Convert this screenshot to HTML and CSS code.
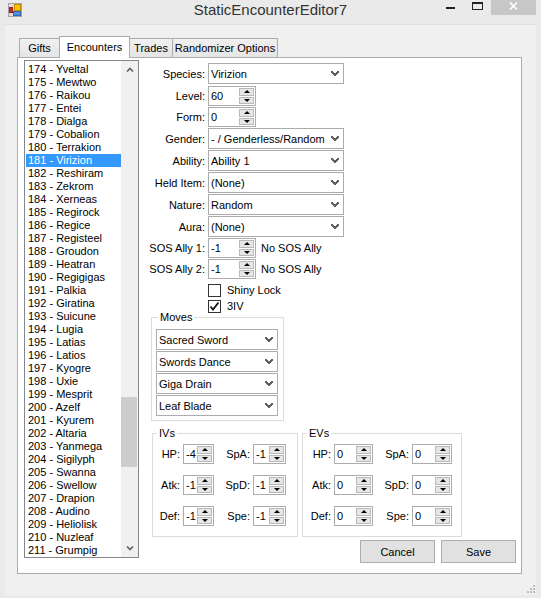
FILE: index.html
```html
<!DOCTYPE html>
<html lang="en">
<head>
  <meta charset="UTF-8" />
  <title>StaticEncounterEditor7</title>
  <link rel="stylesheet" href="styles.css">
</head>
<body>
  <div class="window">
    <div class="titlebar">
      <svg class="app-icon" width="14" height="14" viewBox="0 0 14 14">
        <rect x="0.5" y="0.5" width="13" height="13" fill="#dedede" stroke="#a4a4a4"/>
        <rect x="6.5" y="1.5" width="6" height="6" fill="#f7c600" stroke="#c48a00"/>
        <rect x="1.5" y="4.5" width="3" height="5" fill="#d42a1e" stroke="#9a1a12"/>
        <rect x="5.5" y="8.5" width="7" height="4" fill="#4d8ee6" stroke="#2f62b0"/>
      </svg>
      <div class="title">StaticEncounterEditor7</div>
      <div class="caption">
        <div class="cap-btn">
          <svg width="9" height="2"><rect width="9" height="2" fill="#222"/></svg>
        </div>
        <div class="cap-btn">
          <svg width="11" height="8"><rect x="0.5" y="1" width="10" height="6.5" fill="none" stroke="#222"/><rect width="11" height="2" fill="#222"/></svg>
        </div>
        <div class="cap-btn close">
          <svg width="9" height="8"><path d="M1 0.5 L8 7.5 M8 0.5 L1 7.5" stroke="#fff" stroke-width="1.6"/></svg>
        </div>
      </div>
    </div>

    <div class="client">
      <div class="tabs">
        <div class="tab tab-gifts">Gifts</div>
        <div class="tab tab-enc active">Encounters</div>
        <div class="tab tab-trades">Trades</div>
        <div class="tab tab-rand">Randomizer Options</div>
      </div>

      <div class="tabpage">
        <div class="listbox">
          <div class="items">
            <div class="item">174 - Yveltal</div>
            <div class="item">175 - Mewtwo</div>
            <div class="item">176 - Raikou</div>
            <div class="item">177 - Entei</div>
            <div class="item">178 - Dialga</div>
            <div class="item">179 - Cobalion</div>
            <div class="item">180 - Terrakion</div>
            <div class="item selected">181 - Virizion</div>
            <div class="item">182 - Reshiram</div>
            <div class="item">183 - Zekrom</div>
            <div class="item">184 - Xerneas</div>
            <div class="item">185 - Regirock</div>
            <div class="item">186 - Regice</div>
            <div class="item">187 - Registeel</div>
            <div class="item">188 - Groudon</div>
            <div class="item">189 - Heatran</div>
            <div class="item">190 - Regigigas</div>
            <div class="item">191 - Palkia</div>
            <div class="item">192 - Giratina</div>
            <div class="item">193 - Suicune</div>
            <div class="item">194 - Lugia</div>
            <div class="item">195 - Latias</div>
            <div class="item">196 - Latios</div>
            <div class="item">197 - Kyogre</div>
            <div class="item">198 - Uxie</div>
            <div class="item">199 - Mesprit</div>
            <div class="item">200 - Azelf</div>
            <div class="item">201 - Kyurem</div>
            <div class="item">202 - Altaria</div>
            <div class="item">203 - Yanmega</div>
            <div class="item">204 - Sigilyph</div>
            <div class="item">205 - Swanna</div>
            <div class="item">206 - Swellow</div>
            <div class="item">207 - Drapion</div>
            <div class="item">208 - Audino</div>
            <div class="item">209 - Heliolisk</div>
            <div class="item">210 - Nuzleaf</div>
            <div class="item">211 - Grumpig</div>
          </div>
          <div class="scrollbar">
            <div class="sb-btn">
              <svg width="8" height="5"><path d="M1 4.5 L4 1.5 L7 4.5" fill="none" stroke="#606060" stroke-width="1.6"/></svg>
            </div>
            <div class="sb-track"><div class="sb-thumb"></div></div>
            <div class="sb-btn">
              <svg width="8" height="5"><path d="M1 0.5 L4 3.5 L7 0.5" fill="none" stroke="#606060" stroke-width="1.6"/></svg>
            </div>
          </div>
        </div>

        <div class="editor">
          <div class="fields">
            <label>Species:</label>
            <div class="combo wide"><span>Virizion</span><i class="chev"></i></div>
            <label>Level:</label>
            <div class="num lvl"><span class="val">60</span><span class="spin"><i class="up"></i><i class="down"></i></span></div>
            <label>Form:</label>
            <div class="num lvl"><span class="val">0</span><span class="spin"><i class="up"></i><i class="down"></i></span></div>
            <label>Gender:</label>
            <div class="combo wide"><span>- / Genderless/Random</span><i class="chev"></i></div>
            <label>Ability:</label>
            <div class="combo wide"><span>Ability 1</span><i class="chev"></i></div>
            <label>Held Item:</label>
            <div class="combo wide"><span>(None)</span><i class="chev"></i></div>
            <label>Nature:</label>
            <div class="combo wide"><span>Random</span><i class="chev"></i></div>
            <label>Aura:</label>
            <div class="combo wide"><span>(None)</span><i class="chev"></i></div>
            <label>SOS Ally 1:</label>
            <div class="sos">
              <div class="num lvl"><span class="val">-1</span><span class="spin"><i class="up"></i><i class="down"></i></span></div>
              <span>No SOS Ally</span>
            </div>
            <label>SOS Ally 2:</label>
            <div class="sos">
              <div class="num lvl"><span class="val">-1</span><span class="spin"><i class="up"></i><i class="down"></i></span></div>
              <span>No SOS Ally</span>
            </div>
          </div>

          <div class="checks">
            <div class="check"><span class="box"></span>Shiny Lock</div>
            <div class="check"><span class="box">
              <svg width="11" height="11" viewBox="0 0 11 11"><path d="M1.5 5.5 L4 8.5 L9.5 1.5" fill="none" stroke="#111" stroke-width="1.8"/></svg>
            </span>3IV</div>
          </div>

          <fieldset class="group moves">
            <legend>Moves</legend>
            <div class="combo"><span>Sacred Sword</span><i class="chev"></i></div>
            <div class="combo"><span>Swords Dance</span><i class="chev"></i></div>
            <div class="combo"><span>Giga Drain</span><i class="chev"></i></div>
            <div class="combo"><span>Leaf Blade</span><i class="chev"></i></div>
          </fieldset>

          <div class="stats">
            <fieldset class="group ivs">
              <legend>IVs</legend>
              <label>HP:</label>
              <div class="num"><span class="val">-4</span><span class="spin"><i class="up"></i><i class="down"></i></span></div>
              <label>SpA:</label>
              <div class="num"><span class="val">-1</span><span class="spin"><i class="up"></i><i class="down"></i></span></div>
              <label>Atk:</label>
              <div class="num"><span class="val">-1</span><span class="spin"><i class="up"></i><i class="down"></i></span></div>
              <label>SpD:</label>
              <div class="num"><span class="val">-1</span><span class="spin"><i class="up"></i><i class="down"></i></span></div>
              <label>Def:</label>
              <div class="num"><span class="val">-1</span><span class="spin"><i class="up"></i><i class="down"></i></span></div>
              <label>Spe:</label>
              <div class="num"><span class="val">-1</span><span class="spin"><i class="up"></i><i class="down"></i></span></div>
            </fieldset>
            <fieldset class="group evs">
              <legend>EVs</legend>
              <label>HP:</label>
              <div class="num"><span class="val">0</span><span class="spin"><i class="up"></i><i class="down"></i></span></div>
              <label>SpA:</label>
              <div class="num"><span class="val">0</span><span class="spin"><i class="up"></i><i class="down"></i></span></div>
              <label>Atk:</label>
              <div class="num"><span class="val">0</span><span class="spin"><i class="up"></i><i class="down"></i></span></div>
              <label>SpD:</label>
              <div class="num"><span class="val">0</span><span class="spin"><i class="up"></i><i class="down"></i></span></div>
              <label>Def:</label>
              <div class="num"><span class="val">0</span><span class="spin"><i class="up"></i><i class="down"></i></span></div>
              <label>Spe:</label>
              <div class="num"><span class="val">0</span><span class="spin"><i class="up"></i><i class="down"></i></span></div>
            </fieldset>
          </div>

          <div class="actions">
            <button class="btn">Cancel</button>
            <button class="btn">Save</button>
          </div>
        </div>
      </div>

      <svg class="grip" width="8" height="8" viewBox="0 0 8 8">
        <rect x="6" y="0" width="2" height="2" fill="#bdbdbd"/>
        <rect x="3" y="3" width="2" height="2" fill="#bdbdbd"/>
        <rect x="6" y="3" width="2" height="2" fill="#bdbdbd"/>
        <rect x="0" y="6" width="2" height="2" fill="#bdbdbd"/>
        <rect x="3" y="6" width="2" height="2" fill="#bdbdbd"/>
        <rect x="6" y="6" width="2" height="2" fill="#bdbdbd"/>
      </svg>
    </div>
  </div>
</body>
</html>
```

FILE: styles.css
```css
* {
  box-sizing: border-box;
}
body {
  margin: 0;
  background: #eaeaea;
  font-family: 'Liberation Sans', Arial, sans-serif;
  font-size: 11px;
  color: #000;
}
.window {
  width: 541px;
  height: 598px;
  display: flex;
  flex-direction: column;
  background: #eaeaea;
}
.titlebar {
  height: 24px;
  flex: none;
  display: grid;
  grid-template-columns: 1fr auto 1fr;
  align-items: start;
}
.app-icon {
  margin: 3px 0 0 8px;
}
.title {
  font-size: 15px;
  line-height: 20px;
  color: #333;
}
.caption {
  justify-self: end;
  display: flex;
  margin-right: 5px;
}
.cap-btn {
  width: 27px;
  height: 15px;
  display: flex;
  align-items: center;
  justify-content: center;
}
.cap-btn:first-child svg {
  margin-top: 1px;
}
.cap-btn:nth-child(2) svg {
  margin-top: -3px;
}
.cap-btn.close {
  width: 45px;
  background: #c7c7c7;
}
.cap-btn.close svg {
  margin-top: -3px;
}

/* client area */
.client {
  flex: 1;
  margin: 0 5px 3px;
  background: #f0f0f0;
  border-top: 1px solid #e2e2e2;
  padding: 11px 0 0 12px;
  display: flex;
  flex-direction: column;
}
.tabs {
  display: flex;
  align-items: flex-end;
  padding-left: 2px;
  margin-bottom: -1px;
  position: relative;
  z-index: 1;
}
.tab {
  height: 19px;
  margin-bottom: 1px;
  margin-left: -1px;
  border: 1px solid #acacac;
  border-bottom: none;
  background: linear-gradient(#f0f0f0, #e5e5e5);
  text-align: center;
  line-height: 18px;
  white-space: nowrap;
}
.tab:first-child {
  margin-left: 0;
}
.tab.active {
  height: 22px;
  margin-bottom: 0;
  background: #fff;
  line-height: 20px;
}
.tab-gifts { width: 41px; }
.tab-enc { width: 71px; }
.tab-trades { width: 44px; }
.tab-rand { width: 106px; }

.tabpage {
  width: 505px;
  height: 517px;
  background: #fff;
  border: 1px solid #acacac;
  display: flex;
  align-items: flex-start;
}

/* list of encounters */
.listbox {
  margin: 2px 0 0 6px;
  width: 115px;
  height: 498px;
  border: 1px solid #828790;
  display: flex;
}
.items {
  flex: 1;
  padding: 2px 0 0 1px;
  overflow: hidden;
}
.item {
  height: 13px;
  line-height: 13px;
  padding-left: 2px;
  white-space: nowrap;
}
.item.selected {
  background: #3399ff;
  color: #fff;
}
.scrollbar {
  width: 17px;
  background: #f0f0f0;
  display: flex;
  flex-direction: column;
}
.sb-btn {
  height: 17px;
  display: flex;
  align-items: center;
  justify-content: center;
}
.sb-track {
  flex: 1;
}
.sb-thumb {
  margin: 319px 1px 0 0;
  height: 70px;
  background: #cdcdcd;
}

/* editor */
.editor {
  flex: 1;
  margin-left: 6px;
  padding: 5px 5px 0 0;
}
.fields {
  display: grid;
  grid-template-columns: 60px auto;
  grid-template-rows: 21px 21px 20px 21px 21px 21px 21px 21px 20px 20px;
  column-gap: 3px;
  row-gap: 1px;
  align-items: end;
  justify-items: start;
}
.fields label {
  justify-self: end;
  align-self: center;
  white-space: nowrap;
}
.combo {
  height: 21px;
  border: 1px solid #acacac;
  background: #fff;
  display: flex;
  align-items: center;
  justify-content: space-between;
  padding: 0 4px 0 2px;
  white-space: nowrap;
}
.combo.wide {
  width: 136px;
}
.chev {
  width: 8px;
  height: 5px;
  background: linear-gradient(45deg, transparent 2.6px, #606060 2.6px, #606060 4.3px, transparent 4.3px) left / 4px 5px no-repeat,
              linear-gradient(-45deg, transparent 2.6px, #606060 2.6px, #606060 4.3px, transparent 4.3px) right / 4px 5px no-repeat;
}
.num {
  height: 20px;
  border: 1px solid #acacac;
  background: #fff;
  display: flex;
  width: 100%;
}
.num.lvl {
  width: 48px;
}
.val {
  flex: 1;
  padding-left: 2px;
  line-height: 18px;
}
.spin {
  width: 16px;
  display: flex;
  flex-direction: column;
  padding: 1px 1px 1px 0;
  gap: 1px;
}
.spin i {
  flex: 1;
  background: #e6e6e6;
  border: 1px solid #b9b9b9;
  display: flex;
  align-items: center;
  justify-content: center;
}
.spin i::before {
  content: "";
  border-left: 3px solid transparent;
  border-right: 3px solid transparent;
}
.spin .up::before {
  border-bottom: 3px solid #000;
}
.spin .down::before {
  border-top: 3px solid #000;
}
.sos {
  display: flex;
  align-items: center;
  gap: 5px;
  white-space: nowrap;
}

.checks {
  margin: 3px 0 0 63px;
}
.check {
  height: 16px;
  display: flex;
  align-items: center;
  gap: 6px;
}
.box {
  width: 13px;
  height: 13px;
  border: 1px solid #333;
  background: #fff;
  display: flex;
  align-items: center;
  justify-content: center;
}

/* group boxes */
.group {
  margin: 0;
  border: 1px solid #dcdcdc;
  min-width: 0;
}
.group legend {
  padding: 0 2px;
  line-height: 11px;
}
.moves {
  margin: -2px 0 0 6px;
  width: 133px;
  padding: 6px 5px 4px 4px;
  display: flex;
  flex-direction: column;
  gap: 1px;
}
.moves legend {
  margin-left: 2px;
}
.stats {
  display: flex;
  gap: 4px;
  margin: 7px 0 0 7px;
}
.ivs, .evs {
  padding: 5px 0 10px 4px;
  display: grid;
  grid-auto-rows: 20px;
  row-gap: 11px;
  column-gap: 3px;
  align-items: center;
}
.ivs {
  width: 146px;
  grid-template-columns: 23px 31px 33px 33px;
}
.evs {
  width: 160px;
  grid-template-columns: 24px 39px 33px 40px;
}
.ivs label, .evs label {
  justify-self: end;
  white-space: nowrap;
}

.actions {
  display: flex;
  justify-content: flex-end;
  gap: 6px;
  margin-top: 3px;
}
.btn {
  width: 75px;
  height: 23px;
  border: 1px solid #adadad;
  background: #e1e1e1;
  font-family: inherit;
  font-size: 11px;
  color: #000;
  padding: 0;
}
.grip {
  align-self: flex-end;
  margin: auto 1px 2px 0;
}
```
